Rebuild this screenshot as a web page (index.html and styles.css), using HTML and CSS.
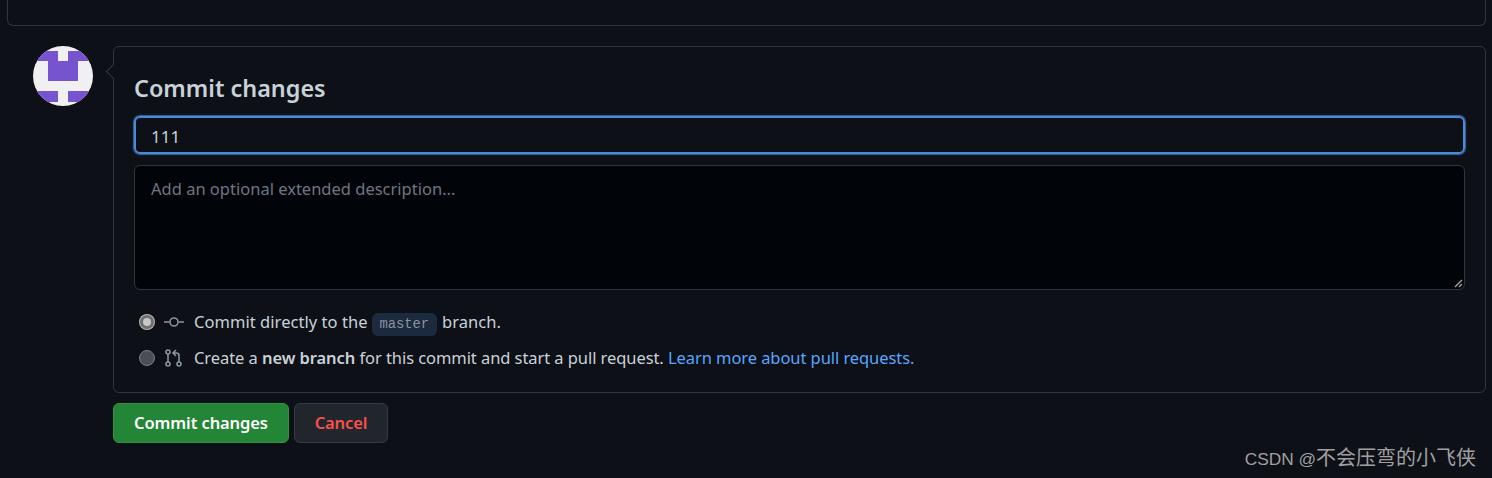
FILE: index.html
```html
<!DOCTYPE html>
<html lang="en">
<head>
    <meta charset="UTF-8">
    <title>Commit changes</title>
    <link rel="stylesheet" href="styles.css">
</head>
<body>
    <div class="top-box"></div>
    <div class="commit-row">
        <svg class="avatar" width="60" height="60" viewBox="0 0 60 60">
            <circle cx="30" cy="30" r="30" fill="#f0f0f2"/>
            <clipPath id="round"><circle cx="30" cy="30" r="30"/></clipPath>
            <g clip-path="url(#round)" fill="#7653cf">
                <rect x="5" y="5" width="20" height="10"/>
                <rect x="35" y="5" width="20" height="10"/>
                <rect x="15" y="15" width="30" height="20"/>
                <rect x="0" y="45" width="25" height="11"/>
                <rect x="35" y="45" width="25" height="11"/>
            </g>
        </svg>
        <div class="commit-col">
            <form class="commit-box">
                <h3 class="title">Commit changes</h3>
                <div class="summary">111</div>
                <div class="description">
                    <span class="placeholder">Add an optional extended description...</span>
                    <svg class="grip" width="9" height="9" viewBox="0 0 9 9">
                        <path d="M1 8L8 1M5 8L8 5" stroke="#a5a5a5" stroke-width="1.4" fill="none"/>
                    </svg>
                </div>
                <div class="option first">
                    <span class="radio checked"></span>
                    <svg class="octicon" width="20" height="16" viewBox="0 0 20 16">
                        <path d="M0 8h5.500M14.500 8H20" stroke="#8b949e" stroke-width="1.600" fill="none"/>
                        <circle cx="10" cy="8" r="4" stroke="#8b949e" stroke-width="1.600" fill="none"/>
                    </svg>
                    <span>Commit directly to the <code class="branch">master</code> branch.</span>
                </div>
                <div class="option">
                    <span class="radio"></span>
                    <svg class="octicon" width="20" height="18" viewBox="0 0 20 18">
                        <g stroke="#8b949e" stroke-width="1.600" fill="none">
                            <circle cx="4" cy="3" r="2"/>
                            <circle cx="4" cy="15" r="2"/>
                            <circle cx="15" cy="15" r="2"/>
                            <path d="M4 5v8M15 13V6.500a2.500 2.500 0 0 0-2.500-2.500H10M12 1L9 4l3 3"/>
                        </g>
                    </svg>
                    <span>Create a <strong>new branch</strong> for this commit and start a pull request. <a class="link" href="#">Learn more about pull requests.</a></span>
                </div>
            </form>
            <div class="actions">
                <button type="button" class="btn btn-primary">Commit changes</button>
                <button type="button" class="btn btn-cancel">Cancel</button>
            </div>
        </div>
    </div>
    <div class="watermark">CSDN @<span class="watermark-name">不会压弯的小飞侠</span></div>
</body>
</html>
```

FILE: styles.css
```css
html, body {
    height: 100%;
}

body {
    margin: 0;
    padding: 0 6px 0 7px;
    box-sizing: border-box;
    overflow: hidden;
    background: #0d1117;
    color: #c9d1d9;
    font-family: "Noto Sans", "Noto Sans CJK SC", sans-serif;
    font-size: 16px;
    position: relative;
}

.top-box {
    height: 26px;
    box-sizing: border-box;
    border: 1px solid #30363d;
    border-top: none;
    border-radius: 0 0 6px 6px;
}

.commit-row {
    display: flex;
    margin-top: 20px;
    padding-left: 26px;
}

.avatar {
    flex: none;
    margin-right: 20px;
}

.commit-col {
    flex: 1;
}

.commit-box {
    position: relative;
    height: 347px;
    box-sizing: border-box;
    padding: 0 20px;
    border: 1px solid #30363d;
    border-radius: 6px;
}

.commit-box::before {
    content: "";
    position: absolute;
    left: -6.500px;
    top: 19px;
    width: 10px;
    height: 10px;
    background: #0d1117;
    border-left: 1px solid #30363d;
    border-bottom: 1px solid #30363d;
    transform: rotate(45deg);
}

.title {
    margin: 0;
    padding-top: 24px;
    height: 45px;
    font-size: 23.400px;
    line-height: 34px;
    font-weight: 600;
}

.summary {
    height: 38px;
    box-sizing: border-box;
    padding-left: 15px;
    border: 2px solid #4a8ad6;
    border-radius: 6px;
    box-shadow: 0 0 1px 1px rgba(74, 138, 214, 0.7);
    line-height: 37px;
    font-size: 17px;
    color: #c9d1d9;
}

.description {
    position: relative;
    height: 125px;
    margin-top: 11px;
    box-sizing: border-box;
    padding: 11px 16px;
    background: #010409;
    border: 1px solid #30363d;
    border-radius: 6px;
    line-height: 24px;
}

.placeholder {
    color: #6e7681;
    font-size: 16.500px;
}

.grip {
    position: absolute;
    right: 1px;
    bottom: 1px;
}

.option {
    display: flex;
    align-items: center;
    height: 36px;
    font-size: 16.500px;
    line-height: 24px;
    letter-spacing: -0.07px;
    white-space: nowrap;
}

.option.first {
    margin-top: 14px;
    letter-spacing: 0.05px;
}

.radio {
    flex: none;
    width: 16px;
    height: 16px;
    margin-left: 5px;
    margin-right: 9px;
    box-sizing: border-box;
    border-radius: 50%;
    background: #4b4f55;
    border: 1px solid #7a7f86;
}

.radio.checked {
    background: #c8c8c8;
    border: 3px solid #6f6f6f;
    box-shadow: 0 0 0 1px #b9b9b9;
    width: 14px;
    height: 14px;
    margin-left: 6px;
    margin-right: 10px;
}

.octicon {
    flex: none;
    margin-right: 10px;
}

.branch {
    display: inline-block;
    margin: -2px 1px -2px 0;
    padding: 0 7.500px;
    background: #1b2a3f;
    border-radius: 6px;
    color: #8b949e;
    font-family: "Liberation Mono", monospace;
    font-size: 13.800px;
    letter-spacing: 0;
    line-height: 23px;
}

strong {
    font-weight: 600;
}

.link {
    color: #58a6ff;
    text-decoration: none;
}

.actions {
    display: flex;
    gap: 5px;
    margin-top: 10px;
}

.btn {
    height: 40px;
    box-sizing: border-box;
    border-radius: 6px;
    font-family: inherit;
    font-size: 16.500px;
    font-weight: 600;
    letter-spacing: -0.1px;
    line-height: 36px;
    padding: 0;
}

.btn-primary {
    width: 176px;
    color: #fff;
    background: #238636;
    border: 1px solid #2f9444;
}

.btn-cancel {
    width: 94px;
    color: #f85149;
    background: #21262d;
    border: 1px solid #363b42;
}

.watermark {
    position: absolute;
    right: 16px;
    bottom: 7px;
    font-family: "Liberation Sans", "Noto Sans CJK SC", sans-serif;
    font-size: 17.300px;
    line-height: 24px;
    color: #a0a0a0;
}

.watermark-name {
    font-family: "Noto Sans CJK SC", sans-serif;
    font-size: 20px;
}
```
